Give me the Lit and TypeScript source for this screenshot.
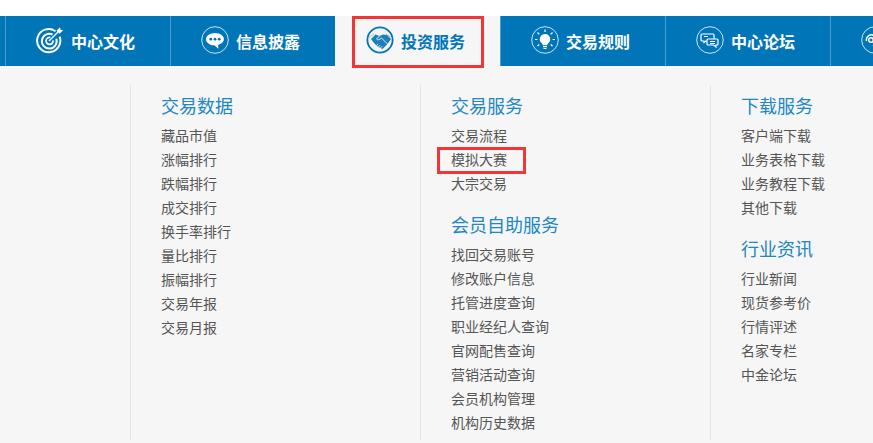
import { LitElement, html, css, svg } from 'lit'
import { customElement } from 'lit/decorators.js'

const icons: Record<string, unknown> = {
  target: svg`
    <g fill="none" stroke="#fff">
      <path stroke-width="2" d="M19.500 5.200A11.600 11.600 0 1 0 23.600 10.600" />
      <path stroke-width="2" d="M16.500 8.500A7.400 7.400 0 1 0 20.300 12.800" />
      <path stroke-width="1.700" d="M14.300 11.500A3.500 3.500 0 1 0 17 14.300" />
      <path stroke-width="1.500" d="M13 15 22 6" />
    </g>
    <path fill="#fff" d="M20.500 4.800 24 1.200 24.500 3.800 27.200 4.300 23.500 7.800Z" />`,
  chat: svg`
    <circle cx="14" cy="14" r="13.300" fill="none" stroke="#cfe3f1" />
    <path fill="#fff" d="M14 7c-5 0-9 2.800-9 6.200 0 3.400 4 6.200 8.600 6.200l3.900 3.300-.5-3.800c3.200-.9 5.900-3.100 5.900-5.700C23 9.800 19 7 14 7Z" />
    <g fill="#0075b8"><circle cx="9.800" cy="13.200" r="1.400" /><circle cx="14" cy="13.200" r="1.400" /><circle cx="18.200" cy="13.200" r="1.400" /></g>`,
  hands: svg`
    <circle cx="14" cy="14" r="12.600" fill="none" stroke="#0075b8" stroke-width="1.800" />
    <path fill="none" stroke="#8fc2df" stroke-width="1" d="M2 12 8 8M26 12 20 8" />
    <path fill="#1b7fb9" d="M5 13 9.500 8.500 13.500 10 17 8.500 21 9 25 13 21.500 18 16.500 23 14.500 22 12.500 21 10.500 19.500 8 17Z" />
    <path fill="none" stroke="#f5f5f5" stroke-width=".9" d="M13.500 10 10.500 13C11.500 14.200 12.800 14 14 13L15.500 12 21.500 18M10.500 19.500 12 17.800M12.500 21 14 19.300M14.500 22 16 20.300" />`,
  bulb: svg`
    <circle cx="14" cy="14" r="13.300" fill="none" stroke="#cfe3f1" />
    <path fill="#fff" d="M14 8a5.200 5.200 0 0 0-3.200 9.300c.7.600 1 1.200 1.100 1.900h4.200c.1-.7.400-1.300 1.100-1.900A5.200 5.200 0 0 0 14 8Z" />
    <path fill="#fff" d="M12 20h4v1.200h-4zM12.500 22h3v1h-3z" />
    <path stroke="#fff" stroke-width="1.200" d="M14 3.500V6M6.500 6.500 8.300 8.300M21.500 6.500 19.700 8.300M4 13.500H6.500M21.500 13.500H24M6.500 20l1.800-1.500M21.500 20l-1.800-1.500" />`,
  forum: svg`
    <circle cx="14" cy="14" r="13.300" fill="none" stroke="#cfe3f1" />
    <g fill="none" stroke="#fff" stroke-width="1.200">
      <path d="M6 8h11a1 1 0 0 1 1 1v5a1 1 0 0 1-1 1H10l-2 1.500V15H6a1 1 0 0 1-1-1V9a1 1 0 0 1 1-1Z" />
      <path fill="#0075b8" d="M12 13h9a1 1 0 0 1 1 1v4a1 1 0 0 1-1 1h-1v2l-2.500-2H12a1 1 0 0 1-1-1v-4a1 1 0 0 1 1-1Z" />
      <path d="M8 10.500h4M14 15.500h5M14 17.500h5" />
    </g>`,
  phone: svg`
    <circle cx="14" cy="14" r="13.300" fill="none" stroke="#cfe3f1" />
    <g fill="none" stroke="#fff" stroke-width="1.500">
      <path d="M5.500 15a5 5 0 0 1 8-5" />
      <circle cx="10" cy="14" r="2.300" />
      <path d="M12 19c3 2.500 7 1.500 9.500-1" />
    </g>`,
}

const tabs = [
  { icon: 'target', label: '中心文化' },
  { icon: 'chat', label: '信息披露' },
  { icon: 'hands', label: '投资服务', active: true },
  { icon: 'bulb', label: '交易规则' },
  { icon: 'forum', label: '中心论坛' },
  { icon: 'phone', label: '' },
]

const columns = [
  [
    { title: '交易数据', items: ['藏品市值', '涨幅排行', '跌幅排行', '成交排行', '换手率排行', '量比排行', '振幅排行', '交易年报', '交易月报'] },
  ],
  [
    { title: '交易服务', items: ['交易流程', '模拟大赛', '大宗交易'] },
    { title: '会员自助服务', items: ['找回交易账号', '修改账户信息', '托管进度查询', '职业经纪人查询', '官网配售查询', '营销活动查询', '会员机构管理', '机构历史数据'] },
  ],
  [
    { title: '下载服务', items: ['客户端下载', '业务表格下载', '业务教程下载', '其他下载'] },
    { title: '行业资讯', items: ['行业新闻', '现货参考价', '行情评述', '名家专栏', '中金论坛'] },
  ],
]

@customElement('app-root')
export class AppRoot extends LitElement {
  static styles = css`
    :host {
      display: block;
      position: relative;
      width: 873px;
      height: 443px;
      box-sizing: border-box;
      padding-top: 16px;
      overflow: hidden;
      background: #fff;
      font-family: "Liberation Sans", "Noto Sans CJK SC", sans-serif;
    }

    .nav {
      display: flex;
      padding-left: 5px;
      height: 50px;
      background: #0075b8;
    }

    .tab {
      flex: 0 0 165px;
      box-sizing: border-box;
      display: flex;
      align-items: center;
      gap: 7px;
      padding-left: 30px;
      border-left: 1px solid #4d9ecd;
      color: #fff;
      font-size: 16px;
      font-weight: 700;
    }

    .tab.active {
      background: #f6f6f6;
      color: #0075b8;
      border-left-color: #f6f6f6;
    }

    .tab svg {
      width: 28px;
      height: 28px;
      flex: none;
      margin-top: -3px;
    }

    .panel {
      display: flex;
      height: 377px;
      padding: 19px 0 3px 130px;
      box-sizing: border-box;
      background: #f6f6f6;
    }

    .col {
      flex: 0 0 290px;
      box-sizing: border-box;
      padding: 10px 0 0 30px;
      border-left: 1px solid #e4e4e4;
    }

    h3 {
      margin: 0 0 5px;
      font-size: 18px;
      font-weight: 400;
      line-height: 24px;
      color: #2186c4;
    }

    ul {
      margin: 0 0 18px;
      padding: 0;
      list-style: none;
    }

    li {
      font-size: 14px;
      line-height: 24px;
      color: #555;
    }

    .mark {
      position: absolute;
      box-sizing: border-box;
      border: 3px solid #f43535;
    }

    .mark.tab-mark {
      left: 352px;
      top: 16px;
      width: 132px;
      height: 52px;
    }

    .mark.item-mark {
      left: 437px;
      top: 147px;
      width: 89px;
      height: 27px;
    }
  `

  render() {
    return html`
      <div class="nav">
        ${tabs.map(t => html`
          <div class="tab ${t.active ? 'active' : ''}">
            <svg viewBox="0 0 28 28">${icons[t.icon]}</svg>
            ${t.label ? html`<span>${t.label}</span>` : ''}
          </div>
        `)}
      </div>
      <div class="panel">
        ${columns.map(groups => html`
          <div class="col">
            ${groups.map(g => html`
              <h3>${g.title}</h3>
              <ul>${g.items.map(i => html`<li>${i}</li>`)}</ul>
            `)}
          </div>
        `)}
      </div>
      <div class="mark tab-mark"></div>
      <div class="mark item-mark"></div>
    `
  }
}
